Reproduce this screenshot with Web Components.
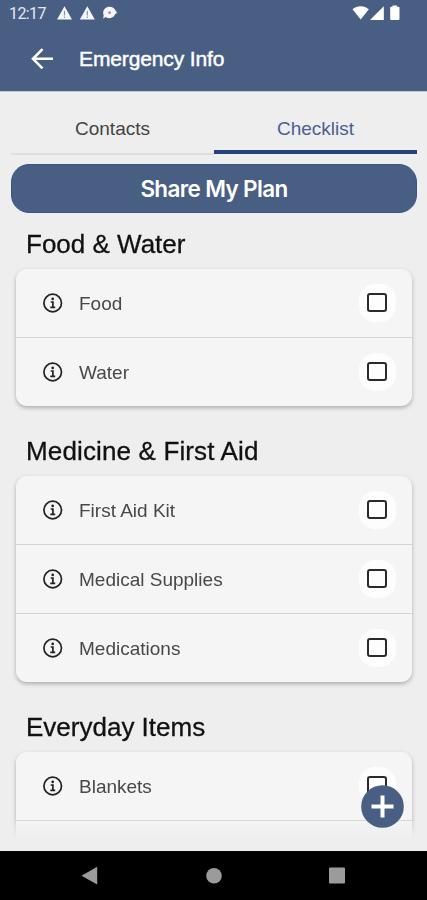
<!DOCTYPE html>
<html lang="en">
<head>
<meta charset="utf-8">
<title>Emergency Info</title>
<style>
html,body{margin:0;height:100%;overflow:hidden}
body{font-family:"Liberation Sans",Arial,sans-serif;background:#eee}
</style>
</head>
<body>
<emergency-app></emergency-app>
<script>
const define = (name, html) => customElements.define(name, class extends HTMLElement {
  constructor() {
    super();
    const t = document.createElement('template');
    t.innerHTML = html;
    this.attachShadow({mode: 'open'}).append(t.content.cloneNode(true));
  }
});

define('status-bar', `<style>
:host{display:flex;height:27px;box-sizing:border-box;padding:0 26px 0 9px;align-items:center;color:#e3e8f1;font:16px/27px Roboto,sans-serif}
span{width:48px;letter-spacing:-.6px}
.gap{flex:1}svg{display:block}
</style><span>12:17</span>
<svg width="62" height="20" viewBox="57 4 62 20" fill="#f4f6fa"><path d="M64.5 6.300 72 19.600H57z"/><path d="M87.300 6.300 94.800 19.600H79.800z"/><path d="M64.500 11v4.500M64.500 16.500v1.500M87.300 11v4.500M87.300 16.500v1.500" stroke="#8391af" stroke-width="1.200"/><path d="M109.500 6.800c3 0 4.800 1.500 5.700 3.300l2 2.800-2 1.200c-.9 2.500-3 4.100-5.700 4.100-1.500 0-2.800-.4-3.800-1.200l-2.600 1.700.6-3.200c-.4-.9-.5-1.700-.5-2.600 0-3.400 2.800-6.100 6.300-6.100z"/><circle cx="109.600" cy="12.700" r="1.400" fill="#8a98b5"/></svg>
<div class="gap"></div>
<svg width="49" height="20" viewBox="352 4 49 20" fill="#fff"><path d="M352.500 9.300c4.500-4.200 11.800-4.200 16.300 0l-8.100 10.200z"/><path d="M370 20 383.800 6.200V20z"/><path d="M392.500 5.500h4.400v1.300h1.600q1 0 1 1V19q0 1-1 1h-7.300q-1 0-1-1V7.800q0-1 1-1h1.300z"/></svg>`);

define('title-bar', `<style>
:host{display:flex;height:64px;align-items:center;padding-left:30px;color:#fff}
h1{margin:0 0 0 25px;font:21px/30px "Liberation Sans",Arial,sans-serif;letter-spacing:-.13px;-webkit-text-stroke:.45px #fff}
svg{display:block}
</style><svg width="24" height="24" viewBox="0 0 24 24" fill="none" stroke="#fff" stroke-width="2.600"><path d="M23 11.800H3.500M12.500 2.200 3 11.800 12.500 21.400"/></svg><h1><slot></slot></h1>`);

define('tab-item', `<style>
:host{display:block;flex:1;height:49px;text-align:center;font-size:19px;line-height:50px;color:#444;border-bottom:2px solid #dedede}
:host([selected]){color:#4a6190;border-bottom:4px solid #27427a;height:46px}
</style><slot></slot>`);

define('share-button', `<style>
:host{display:block}
button{display:block;width:100%;height:49px;padding:0;border:1px solid #3c5588;border-radius:18px;background:#495e83;color:#fff;font:600 22.500px/47px Inter,sans-serif;letter-spacing:-.65px}
</style><button><slot></slot></button>`);

define('check-box', `<style>
:host{display:flex;width:37px;height:38px;border-radius:16px;background:#fdfdfd;align-items:center;justify-content:center}
i{box-sizing:border-box;width:20px;height:19px;margin:0 1px 1px 0;border:2px solid #2a2a2a;border-radius:3px}
</style><i></i>`);

define('check-row', `<style>
:host{display:flex;height:69px;box-sizing:border-box;align-items:center;padding:0 16px 0 27px;border-bottom:1px solid #d4d4d4}
:host(:last-child){border-bottom:0;height:68px}
.t{flex:1;margin:2px 0 0 16px;font-size:19px;color:#484848;line-height:24px}
check-box{margin-bottom:1px}
svg{display:block}
</style><svg width="20" height="20" viewBox="0 0 20 20" fill="none" stroke="#222"><circle cx="9.700" cy="10" r="8.800" stroke-width="1.700"/><circle cx="9.700" cy="5.900" r="1.350" fill="#222" stroke="none"/><path d="M7.700 9h2.200v5.200M7.300 14.300h4.900" stroke-width="1.700"/></svg><div class="t"><slot></slot></div><check-box></check-box>`);

define('check-group', `<style>
:host{display:block;margin-bottom:22px}
h2{margin:0 0 0 10px;height:48px;font-weight:400;font-size:26px;line-height:46px;color:#111;-webkit-text-stroke:.3px #111}
.card{border-radius:11px;background:#f5f5f5;box-shadow:0 2px 4px rgba(0,0,0,.27)}
</style><h2><slot name="title"></slot></h2><div class="card"><slot></slot></div>`);

define('add-button', `<style>
:host{display:block;width:43px;height:43px}svg{display:block}
</style><svg width="43" height="43" viewBox="0 0 43 43"><circle cx="21.500" cy="21.500" r="21.300" fill="#495e83"/><path d="M21.500 10.500v22M10.500 21.500h22" stroke="#fff" stroke-width="4"/></svg>`);

define('nav-bar', `<style>
:host{display:block;height:49px;background:#000}svg{display:block}
</style><svg width="427" height="49" viewBox="0 851 427 49" fill="#9b9b9b"><path d="M81.500 875.700 97.200 866.800V884.600z"/><circle cx="214" cy="875.700" r="7.800"/><rect x="329" y="867.500" width="16" height="16" rx="1"/></svg>`);

define('emergency-app', `<style>
:host{display:flex;flex-direction:column;width:427px;height:900px;background:#eee;position:relative}
header{background:#495e83;height:91px;flex:none;border-bottom:1px solid #c5cad4}
nav{display:flex;align-items:flex-start;height:49px;margin:12px 10px 0 11px;flex:none}
share-button{margin:11px 10px 0 11px;flex:none}
main{height:625px;box-sizing:border-box;padding:8px 15px 0 16px;overflow:hidden;flex:none;-webkit-mask-image:linear-gradient(#000 605px,transparent 624px)}
nav-bar{margin-top:auto;flex:none}
add-button{position:absolute;left:361px;top:785px}
.wide{letter-spacing:.14px}
</style>
<header><status-bar></status-bar><title-bar>Emergency Info</title-bar></header>
<nav><tab-item>Contacts</tab-item><tab-item selected>Checklist</tab-item></nav>
<share-button>Share My Plan</share-button>
<main>
<check-group><span slot="title">Food &amp; Water</span><check-row>Food</check-row><check-row>Water</check-row></check-group>
<check-group><span slot="title" class="wide">Medicine &amp; First Aid</span><check-row>First Aid Kit</check-row><check-row>Medical Supplies</check-row><check-row>Medications</check-row></check-group>
<check-group><span slot="title">Everyday Items</span><check-row>Blankets</check-row><check-row></check-row></check-group>
</main>
<add-button></add-button>
<nav-bar></nav-bar>`);
</script>
</body>
</html>
